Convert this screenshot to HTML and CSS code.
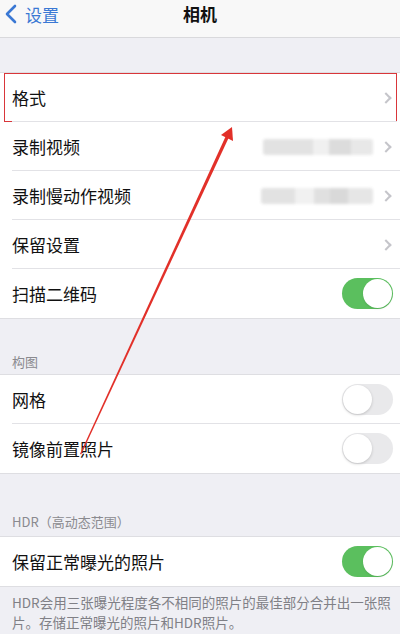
FILE: index.html
```html
<!DOCTYPE html>
<html lang="zh">
<head>
<meta charset="utf-8">
<link rel="stylesheet" href="styles.css">
</head>
<body>
<div class="page">
  <header class="nav">
    <div class="back">
      <svg class="back-icon" width="12" height="20" viewBox="0 0 12 20"><path d="M10 2 L2 10 L10 18" fill="none" stroke="#3a78d4" stroke-width="2.6" stroke-linecap="round" stroke-linejoin="round"/></svg>
      <span>设置</span>
    </div>
    <div class="title">相机</div>
  </header>

  <div class="gap-top"></div>

  <section class="group">
    <div class="row highlight"><span class="label">格式</span><span class="chev"></span></div>
    <div class="row"><span class="label">录制视频</span><span class="blur blur-a"></span><span class="chev"></span></div>
    <div class="row"><span class="label">录制慢动作视频</span><span class="blur blur-b"></span><span class="chev"></span></div>
    <div class="row"><span class="label">保留设置</span><span class="chev"></span></div>
    <div class="row last"><span class="label">扫描二维码</span><span class="toggle on"></span></div>
  </section>

  <div class="section-head head-1">构图</div>
  <section class="group">
    <div class="row"><span class="label">网格</span><span class="toggle"></span></div>
    <div class="row last"><span class="label">镜像前置照片</span><span class="toggle"></span></div>
  </section>

  <div class="section-head head-2">HDR（高动态范围）</div>
  <section class="group">
    <div class="row last"><span class="label">保留正常曝光的照片</span><span class="toggle on"></span></div>
  </section>
  <p class="footer">HDR会用三张曝光程度各不相同的照片的最佳部分合并出一张照片。存储正常曝光的照片和HDR照片。</p>

  <svg class="arrow" width="400" height="634" viewBox="0 0 400 634">
    <polygon points="80,454 81.2,454.4 229.5,136 226.5,134.6" fill="#e23029"/>
    <polygon points="232,127 233,141 221,135" fill="#e23029"/>
  </svg>
</div>
</body>
</html>
```

FILE: styles.css
```css
* { box-sizing: border-box; }
html, body { margin: 0; padding: 0; }
body {
  font-family: "Noto Sans CJK SC", "Noto Sans", sans-serif;
  background: #efeff4;
  width: 400px;
  height: 634px;
  overflow: hidden;
}
.page { position: relative; width: 400px; height: 634px; }
.nav {
  position: relative;
  height: 38px;
  background: #f8f8f8;
  border-bottom: 1px solid #d9d9dc;
  display: flex;
  align-items: center;
}
.back {
  display: flex;
  align-items: center;
  gap: 8px;
  padding-left: 5px;
  color: #3a78d4;
  font-size: 17px;
  margin-top: -9px;
}
.back-icon { display: block; }
.title {
  position: absolute;
  left: 0; right: 0; top: 0;
  text-align: center;
  font-size: 17px;
  font-weight: 700;
  color: #111;
  line-height: 28px;
}
.gap-top { height: 34px; }
.group { background: #fff; border-top: 1px solid #dedee2; border-bottom: 1px solid #dedee2; }
.row {
  position: relative;
  height: 49px;
  display: flex;
  align-items: center;
  padding: 0 7px 0 12px;
  font-size: 17px;
  color: #111;
}
.row::after {
  content: "";
  position: absolute;
  left: 12px; right: 0; bottom: 0;
  height: 1px;
  background: #e2e2e6;
}
.row.last::after { display: none; }
.row.highlight { outline: 1px solid #d9363a; outline-offset: -1px; margin: 0 3px 0 4px; padding-left: 8px; padding-right: 4px; }
.row.highlight::after { left: 8px; }
.label { flex: 1; }
.chev {
  width: 8px; height: 8px;
  border-right: 2px solid #c5c5ca;
  border-top: 2px solid #c5c5ca;
  transform: rotate(45deg);
  margin-right: 3px;
}
.blur {
  height: 16px;
  margin-right: 9px;
  border-radius: 3px;
  filter: blur(1.5px);
}
.blur-a {
  width: 110px;
  background: linear-gradient(90deg, #e2e2e2 0 45%, #f0f0f0 45% 60%, #dcdcdc 60% 80%, #e8e8e8 80%);
}
.blur-b {
  width: 112px;
  background: linear-gradient(90deg, #e2e2e2 0 30%, #f1f1f1 30% 47%, #e0e0e0 47% 62%, #d9d9d9 62% 78%, #e6e6e6 78%);
}
.toggle {
  position: relative;
  width: 51px; height: 31px;
  border-radius: 16px;
  background: #e9e9eb;
  margin-right: 0;
}
.toggle::before {
  content: "";
  position: absolute;
  top: 1px; left: 1px;
  width: 29px; height: 29px;
  border-radius: 50%;
  background: #fff;
  box-shadow: 0 1px 3px rgba(0,0,0,0.18);
}
.toggle.on { background: #5bbf5e; }
.toggle.on::before { left: 21px; box-shadow: 0 1px 2px rgba(0,0,0,0.1); }
.section-head {
  font-size: 13px;
  color: #8a8a8f;
  padding: 0 12px;
}
.head-1 { padding-top: 33px; padding-bottom: 3px; }
.head-2 { padding-top: 38px; padding-bottom: 5px; }
.footer {
  margin: 0;
  padding: 5px 4px 0 12px;
  font-size: 13.5px;
  line-height: 20px;
  color: #808086;
}
.arrow { position: absolute; left: 0; top: 0; pointer-events: none; }
```
